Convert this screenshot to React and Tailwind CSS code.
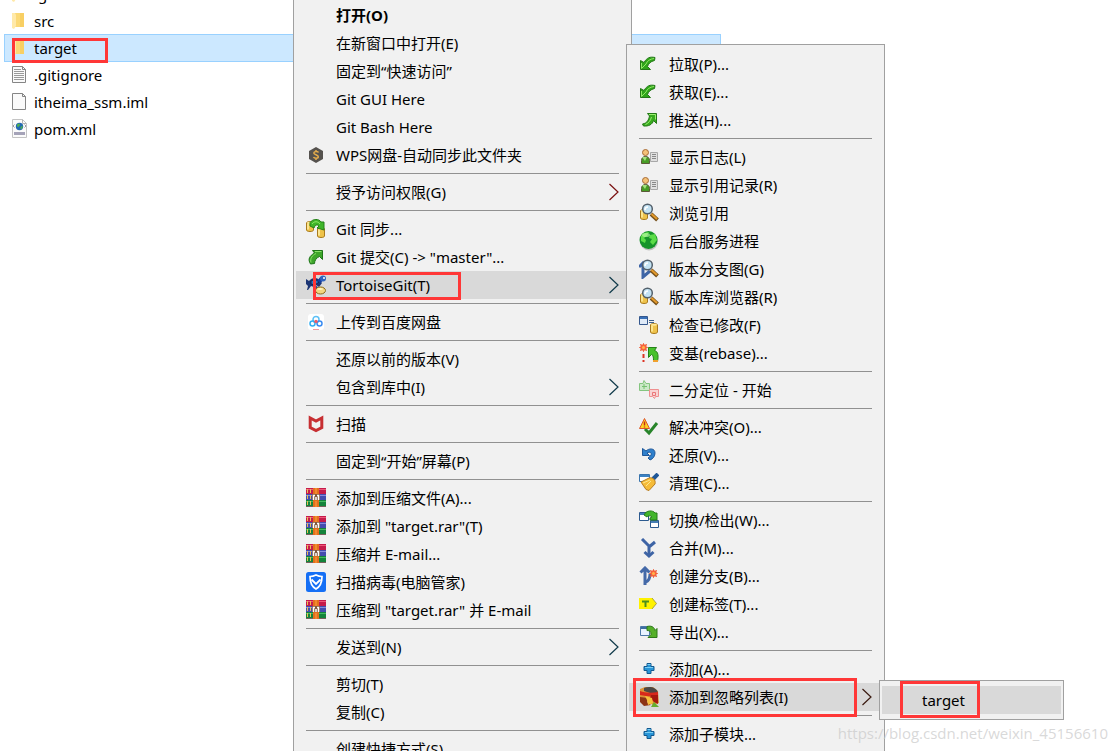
import { useState } from 'react';

const svg = { width: 20, height: 20, viewBox: '0 0 20 20', fill: 'none', 'aria-hidden': true };

function Folder() {
  return (
    <svg {...svg}>
      <path d="M3 2h9v14H3z" fill="#fbd977" />
      <path d="M8 2h4v14H8z" fill="#f8cf63" />
      <path d="M0 2h3l1 2v11l-2 3-2-1z" fill="#ffe9a9" />
    </svg>
  );
}

function Page({ children }) {
  return (
    <svg {...svg}>
      <path d="M.5 1.500h10l3 3v13H.500z" fill="#fafafa" stroke="#858585" />
      <path d="M10.500 1.500v3h3" stroke="#858585" />
      {children}
    </svg>
  );
}

function TextPage() {
  return (
    <Page>
      <path d="M2 4.500h7M2 6.500h10M2 8.500h10M2 10.500h10M2 12.500h10M2 14.500h10" stroke="#9a9a9a" />
    </Page>
  );
}

function XmlPage() {
  return (
    <svg {...svg}>
      <path d="M.500.500h10l4 4v14H.500z" fill="#fbfbfb" stroke="#c4c4c4" />
      <path d="M10.500.500v4h4" stroke="#b5b5b5" />
      <path d="M2.500 5.500 1 7l1.500 1.500M12.500 5.500 14 7l-1.500 1.500" stroke="#9b9ba5" />
      <circle cx="7.500" cy="7.500" r="3.700" fill="#2369b4" />
      <path d="M5 5.500c2-2 3-1 3 .500L6.500 8 5 7.500zM8.500 8l2-1.500c.500 2-.500 3.500-2 4z" fill="#4faf50" />
      <path d="M2 13h11v3H2z" fill="#a5a3b8" />
    </svg>
  );
}

function Wps() {
  return (
    <svg {...svg}>
      <path d="M10 2l7 4v8l-7 4-7-4V6z" fill="#55524e" />
      <path d="M12.500 7.500C12 6 8 6 7.800 8c0 2 4.500 1.500 4.500 3.700 0 2-4 2-4.800.300M10 5v1.500M10 13.500V15" stroke="#e5ad4c" strokeWidth="1.500" />
    </svg>
  );
}

function Jar({ x, y }) {
  return (
    <g transform={`translate(${x} ${y})`}>
      <path d="M.500 2c0-2 7-2 7 0v7c0 2-7 2-7 0z" fill="#eec24a" stroke="#a87a1f" />
      <path d="M2 2.500v6" stroke="#fff0a8" strokeWidth="1.500" />
      <ellipse cx="4" cy="1.800" rx="3" ry="1" fill="#ffe999" />
    </g>
  );
}

function Sync() {
  return (
    <svg {...svg}>
      <Jar x={0} y={2} />
      <Jar x={11} y={8} />
      <path d="M4 7V3.500C7-.500 13-.500 15 3h3v8l-7-2 2-2c-2-2-4-1-5 2z" fill="#3fb529" stroke="#248118" />
      <path d="M6 5c2-3 6-3 8 0" stroke="#8fe968" />
    </svg>
  );
}

function CommitArrow() {
  return (
    <svg {...svg}>
      <path d="M6.500 3.500h10v9l-3-3c-3 1-5 4-5 7l-4 .500c-3-5-1-8 4-11z" fill="#3da52a" stroke="#1d7518" />
      <path d="M9 4.500h6.500M10 6.500c-4 2-6 5-5 9" stroke="#8be168" />
    </svg>
  );
}

function PullArrow() {
  return (
    <svg {...svg}>
      <path d="M1.500 6.500v9h10l-3-3c1-3 3-5 7-6l.500-3c-5-1-8 0-11 5z" fill="#2fa51b" stroke="#247817" />
      <path d="M2.500 9v5.500L7 10c1-3 4-5 8-5.500" stroke="#90e963" />
    </svg>
  );
}

function PushArrow() {
  return (
    <svg {...svg}>
      <path d="M8.500 3.500h9v10l-3-3c-1 4-5 6-10 5.500l-1-2c5-1 6-4 7-8z" fill="#38ab1f" stroke="#247817" />
      <path d="M10 4.500h6.500v5M12.500 7c-1 4-3 6-6 7.500" stroke="#9bef70" />
    </svg>
  );
}

function Tortoise() {
  return (
    <svg {...svg}>
      <path d="M0 4l3 2c3-4 9-4 11 0l2 2-3 4-3-2-2 2-3-1-3 4H1l1-4-2-2z" fill="#1c3574" />
      <path d="M5 6l4-2 4 3-4 3-4-1z" fill="#2b75c4" stroke="#15264e" />
      <path d="M13 7l3-4" stroke="#163c9e" strokeWidth="4" />
      <circle cx="17" cy="3.500" r="3" fill="#3064c0" />
      <circle cx="18" cy="3" r="1" fill="#fff" />
      <path d="M8 11l8 6" stroke="#234b9c" strokeWidth="3" />
      <ellipse cx="14.500" cy="15.500" rx="5" ry="3.500" fill="#f2d681" stroke="#8d6b1b" />
      <ellipse cx="14" cy="14" rx="3" ry="1" fill="#fff4bd" />
    </svg>
  );
}

function Baidu() {
  return (
    <svg {...svg}>
      <rect x="2" y="2" width="16" height="16" rx="3" fill="#fff" />
      <circle cx="10" cy="7.500" r="3" stroke="#5cc0f6" strokeWidth="1.500" />
      <circle cx="6.500" cy="11.500" r="2.500" stroke="#32aef2" strokeWidth="1.500" />
      <circle cx="13.500" cy="11.500" r="2.500" stroke="#3a8cf2" strokeWidth="1.500" />
      <circle cx="10" cy="9.500" r="1.700" fill="#f25c65" />
      <path d="M7 17.500h6" stroke="#ee9da3" />
    </svg>
  );
}

function Mcafee() {
  return (
    <svg {...svg}>
      <path d="M4.200 4v9.500l5.800 3 5.800-3V4L10 7z" stroke="#c72f32" strokeWidth="3" />
    </svg>
  );
}

function Rar() {
  return (
    <svg {...svg}>
      <path d="M0 0h20v6H0z" fill="#c51b4b" />
      <path d="M0 1h20v1H0z" fill="#ed5779" />
      <path d="M0 6h20v6H0z" fill="#444cae" />
      <path d="M0 7h20v1H0z" fill="#858bdc" />
      <path d="M0 12h20v6H0z" fill="#14833b" />
      <path d="M0 13h20v1H0z" fill="#43b95e" />
      <path d="M0 18h20v1H0z" fill="#77605c" />
      <path d="M1.500 1v4M1.500 7v4M1.500 13v4M4.500 1v4M4.500 7v4M4.500 13v4" stroke="#e6bd54" />
      <path d="M7 0h6v19H7z" fill="#e3701c" />
      <path d="M10 0v6M10 13v6" stroke="#ffa143" />
      <path d="M6 6h8v6H6z" fill="#80583e" />
      <path d="M7.500 12V7.500h1.500M12.500 12V7.500H11M10 9v3" stroke="#fff" strokeWidth="1.500" />
    </svg>
  );
}

function Guard() {
  return (
    <svg {...svg}>
      <rect width="20" height="20" rx="2.500" fill="#156ff5" />
      <path d="M10 3c2 1 4 1.500 6 1.500 0 6-1.500 10-6 12.500C5.500 14.500 4 10.500 4 4.500 6 4.500 8 4 10 3z" stroke="#fff" strokeWidth="1.700" />
      <path d="M5.500 7.500 10 12l4.500-4.500" stroke="#fff" strokeWidth="1.800" />
    </svg>
  );
}

function Log() {
  return (
    <svg {...svg}>
      <path d="M11.500 5.500h7v9h-7z" fill="#e0e0e0" stroke="#a8a8a8" />
      <path d="M13 7.500h4M13 9.500h4M13 11.500h4" stroke="#888" />
      <path d="M2.500 16.500v-3c0-3 2-4 4-4s4 1 4 4v3z" fill="#479c25" stroke="#5b5a38" />
      <path d="M3 10l3 4 2-4" fill="#a5e080" />
      <circle cx="6.500" cy="5.500" r="3" fill="#f4c178" stroke="#a86b35" />
    </svg>
  );
}

function Magnifier({ children }) {
  return (
    <svg {...svg}>
      {children}
      <path d="M12 11l6.500 6" stroke="#75501a" strokeWidth="4" />
      <path d="M12.500 11l5.500 5" stroke="#e49a2b" strokeWidth="2" />
      <circle cx="8.500" cy="6" r="4.800" fill="#c4e3f4" stroke="#53606b" strokeWidth="1.500" />
      <path d="M6 7c0-2 1-3 3-3" stroke="#fff" strokeWidth="1.500" />
    </svg>
  );
}

function BrowseRefs() {
  return (
    <Magnifier>
      <Jar x={1} y={6} />
    </Magnifier>
  );
}

function RevGraph() {
  return (
    <Magnifier>
      <path d="M0 8l4-4 4 5M4 5v13l7-6" stroke="#3e65a6" strokeWidth="3" />
    </Magnifier>
  );
}

function Globe() {
  return (
    <svg {...svg}>
      <circle cx="10" cy="10.500" r="9" fill="#777" opacity=".4" />
      <circle cx="9.500" cy="9" r="9" fill="#16942a" />
      <path d="M2 5c2-3 5-4 8-4L8 5 5 7l2 2-1 3-4-2zM11 4l5-1 2 6-4 5-3-3 2-3-3-1z" fill="#5bdc48" />
      <ellipse cx="7" cy="4" rx="4" ry="2" fill="#c4ffb1" opacity=".6" />
    </svg>
  );
}

function CheckMods() {
  return (
    <svg {...svg}>
      <path d="M.500 1.500h8v8h-8z" fill="#dfeaf8" stroke="#35588e" />
      <path d="M1 2h7v2H1z" fill="#3970b8" />
      <path d="M10 5.500h5M10 7.500h5" stroke="#3d608c" />
      <Jar x={11} y={8} />
    </svg>
  );
}

function Burst({ x, y }) {
  return (
    <g transform={`translate(${x} ${y})`}>
      <path d="M0-4l1 2 2-1-1 2 2 1-2 1 1 2-2-1-1 2-1-2-2 1 1-2-2-1 2-1-1-2 2 1z" fill="#ff6238" stroke="#f05a35" />
      <circle r="1.500" fill="#ffb64a" />
    </g>
  );
}

function Rebase() {
  return (
    <svg {...svg}>
      <Burst x={4.5} y={4.5} />
      <path d="M4.500 11v4M4.500 17v2" stroke="#dd3424" strokeWidth="2" />
      <path d="M9.500 4.500h8l-2 3c4 1 4 6 3 11h-4c0-4 0-6-2-7l-3 3z" fill="#48c22c" stroke="#258218" />
      <path d="M14 17h5v2h-5z" fill="#f0a12e" />
    </svg>
  );
}

function Bisect() {
  return (
    <svg {...svg}>
      <path d="M5 .500l2 3h3.500v7H.500v-7H4z" fill="#cbe9c7" stroke="#84c57f" />
      <path d="M5 4v5M3 6.500h5" stroke="#76c070" />
      <path d="M10.500 9.500h9v7h-3l-1 2-2-2h-3z" fill="#f8d3d3" stroke="#ef8f90" />
      <path d="M13.500 12.500h3v3h-3z" stroke="#ea7779" />
    </svg>
  );
}

function Resolve() {
  return (
    <svg {...svg}>
      <path d="M6 12l4 4 8-10" stroke="#28842a" strokeWidth="3" />
      <path d="M5.500 1.500l5 10h-10z" fill="#ffd51f" stroke="#dc552a" />
      <path d="M5.500 4.500v4M5.500 9.500v1" stroke="#c72d14" strokeWidth="1.500" />
    </svg>
  );
}

function Revert() {
  return (
    <svg {...svg}>
      <path d="M3.500 3.500v7h7L8 8c3-2 5 0 4 2-1 1.500-1.500 2-3 3l2 2c3-1 5-4 5-7 0-5-6-5-9-2z" fill="#2f80cc" stroke="#1e579a" />
    </svg>
  );
}

function CleanUp() {
  return (
    <svg {...svg}>
      <path d="M.500 1.500h10v7H.500z" fill="#fff" stroke="#3974ad" />
      <path d="M1 2h9v2H1z" fill="#3c82c3" />
      <path d="M14 6l5-5" stroke="#205797" strokeWidth="4" />
      <path d="M2 9l8-4c4-1 7 2 6 6l-6 6.500-3-1z" fill="#f5bb38" stroke="#b87d21" />
      <path d="M4 10l7-3M7 13l5-5" stroke="#ffe68d" />
    </svg>
  );
}

function Switch() {
  return (
    <svg {...svg}>
      <path d="M.500 2.500h9v8h-9zM11.500 10.500h8v7h-8z" fill="#fff" stroke="#2c5a8f" />
      <path d="M1 3h8v2H1zM12 11h7v2h-7z" fill="#477db4" />
      <path d="M5 5c2-5 9-5 11-2h2v7h-7V8l2-1c-2-2-4-1-5 0z" fill="#42b52b" stroke="#257c18" />
    </svg>
  );
}

function Merge() {
  return (
    <svg {...svg}>
      <path d="M3 1l7 7v10M16 4l-6 5" stroke="#3e64a5" strokeWidth="3" />
      <path d="M5.500 14 10 18l4.500-4" stroke="#3e64a5" strokeWidth="3" />
    </svg>
  );
}

function Branch() {
  return (
    <svg {...svg}>
      <path d="M6 19V2M1.500 6.500 6 2l4.500 4.500M7 16c4-2 4-5 4-8" stroke="#4469a8" strokeWidth="3" />
      <Burst x={14.5} y={7.5} />
    </svg>
  );
}

function Tag() {
  return (
    <svg {...svg}>
      <path d="M0 4h13l4.500 5.500L13 15H0z" fill="#fff200" />
      <path d="M13 4l4.500 5.500L13 15" stroke="#aaa13d" />
      <path d="M3 7.500h7M6.500 7.500V13" stroke="#4d8f1d" strokeWidth="2" />
    </svg>
  );
}

function Export() {
  return (
    <svg {...svg}>
      <path d="M1.500 4.500h9v9h-9z" fill="#e9f3ff" stroke="#4c78a9" />
      <path d="M2 5h8v2H2z" fill="#3e6da1" />
      <path d="M8 4.500c4-1 7 0 8 4l2-2v9H9l3-3c0-3-1-4-4-4z" fill="#55af28" stroke="#2d7819" />
    </svg>
  );
}

function Plus() {
  return (
    <svg {...svg}>
      <path d="M8 4.500h4v3h3v4h-3v3H8v-3H5v-4h3z" fill="#2995d7" stroke="#12588e" />
      <path d="M8.500 5.500h3M6 8.500h8" stroke="#79cef4" />
    </svg>
  );
}

function Ignore() {
  return (
    <svg {...svg}>
      <path d="M1 2l5-2h8l5 4 1 12-6 2-8-5-5 1z" fill="#dc9238" />
      <path d="M5 1c5-2 13-1 14 5l-5 1-9-3z" fill="#4c4745" />
      <path d="M1 4c5 2 11 2 18 1v5L7 9 1 8z" fill="#d8281b" />
      <path d="M12 8h7v9l-4-2-4-4z" fill="#a6180f" />
      <path d="M1 10l8 1-1 4 4 3-7 1-4-4z" fill="#8d3416" />
      <path d="M6 9l7 2 1 5-5 2-1-5z" fill="#f8bf3d" />
      <path d="M12 20l3-5 5 5z" fill="#65ae2e" />
    </svg>
  );
}

const SEP = null;

const explorerItems = [
  { label: '打开(O)', bold: true },
  { label: '在新窗口中打开(E)' },
  { label: '固定到“快速访问”' },
  { label: 'Git GUI Here' },
  { label: 'Git Bash Here' },
  { label: 'WPS网盘-自动同步此文件夹', icon: Wps },
  SEP,
  { label: '授予访问权限(G)', arrow: 'text-[#7a1010]' },
  SEP,
  { label: 'Git 同步...', icon: Sync },
  { label: 'Git 提交(C) -> "master"...', icon: CommitArrow },
  { label: 'TortoiseGit(T)', icon: Tortoise, arrow: 'text-[#103a4a]', active: true, mark: 'left-[17px] top-px w-[148px] h-7' },
  SEP,
  { label: '上传到百度网盘', icon: Baidu },
  SEP,
  { label: '还原以前的版本(V)' },
  { label: '包含到库中(I)', arrow: 'text-[#103a4a]' },
  SEP,
  { label: '扫描', icon: Mcafee },
  SEP,
  { label: '固定到“开始”屏幕(P)' },
  SEP,
  { label: '添加到压缩文件(A)...', icon: Rar },
  { label: '添加到 "target.rar"(T)', icon: Rar },
  { label: '压缩并 E-mail...', icon: Rar },
  { label: '扫描病毒(电脑管家)', icon: Guard },
  { label: '压缩到 "target.rar" 并 E-mail', icon: Rar },
  SEP,
  { label: '发送到(N)', arrow: 'text-[#103a4a]' },
  SEP,
  { label: '剪切(T)' },
  { label: '复制(C)' },
  SEP,
  { label: '创建快捷方式(S)' },
];

const gitItems = [
  { label: '拉取(P)...', icon: PullArrow },
  { label: '获取(E)...', icon: PullArrow },
  { label: '推送(H)...', icon: PushArrow },
  SEP,
  { label: '显示日志(L)', icon: Log },
  { label: '显示引用记录(R)', icon: Log },
  { label: '浏览引用', icon: BrowseRefs },
  { label: '后台服务进程', icon: Globe },
  { label: '版本分支图(G)', icon: RevGraph },
  { label: '版本库浏览器(R)', icon: BrowseRefs },
  { label: '检查已修改(F)', icon: CheckMods },
  { label: '变基(rebase)...', icon: Rebase },
  SEP,
  { label: '二分定位 - 开始', icon: Bisect },
  SEP,
  { label: '解决冲突(O)...', icon: Resolve },
  { label: '还原(V)...', icon: Revert },
  { label: '清理(C)...', icon: CleanUp },
  SEP,
  { label: '切换/检出(W)...', icon: Switch },
  { label: '合并(M)...', icon: Merge },
  { label: '创建分支(B)...', icon: Branch },
  { label: '创建标签(T)...', icon: Tag },
  { label: '导出(X)...', icon: Export },
  SEP,
  { label: '添加(A)...', icon: Plus },
  { label: '添加到忽略列表(I)', icon: Ignore, arrow: 'text-[#3a1a10]', active: true, mark: 'left-1 -top-[5px] w-56 h-[39px]' },
  SEP,
  { label: '添加子模块...', icon: Plus },
];

const ignoreItems = [
  { label: 'target', active: true, mark: 'left-[18px] -top-[5px] w-20 h-[37px]' },
];

const files = [
  { name: '.git', icon: Folder },
  { name: 'src', icon: Folder },
  { name: 'target', icon: Folder },
  { name: '.gitignore', icon: TextPage },
  { name: 'itheima_ssm.iml', icon: Page },
  { name: 'pom.xml', icon: XmlPage },
];

function Mark({ className }) {
  return <span className={`absolute z-10 border-3 border-[#ff3737] pointer-events-none ${className}`} />;
}

function Chevron({ className }) {
  return (
    <svg width="10" height="18" viewBox="0 0 10 18" fill="none" className={`ml-auto ${className}`} aria-hidden="true">
      <path d="M.500 1 9 9l-8.500 8" stroke="currentColor" strokeWidth="1.200" />
    </svg>
  );
}

function Menu({ items, label, className }) {
  return (
    <ul role="menu" aria-label={label} className={`absolute bg-[#f1f1f1] border border-[#a0a0a0] px-0.5 ${className}`}>
      {items.map((item, i) => {
        if (!item) {
          return <li key={i} role="separator" className="mx-2.5 my-1 h-px bg-[#919191]" />;
        }
        const Icon = item.icon;
        return (
          <li key={i} role="none" className="relative">
            <button
              type="button"
              role="menuitem"
              className={`flex items-center w-full h-7 px-2.5 text-left whitespace-nowrap ${
                item.active ? 'bg-[#d9d9d9]' : 'hover:bg-[#d9d9d9]'
              } ${item.bold ? 'font-bold' : ''}`}
            >
              <span className="w-5 mr-2.5 shrink-0">{Icon && <Icon />}</span>
              {item.label}
              {item.arrow && <Chevron className={item.arrow} />}
            </button>
            {item.mark && <Mark className={item.mark} />}
          </li>
        );
      })}
    </ul>
  );
}

export default function App() {
  const [selected, setSelected] = useState('target');

  return (
    <main className="relative h-screen overflow-hidden bg-white text-black text-[15px] leading-5 font-['Noto_Sans','Noto_Sans_CJK_SC',sans-serif]">
      <ul className="-mt-5 ml-1 max-w-[717px]">
        {files.map(({ name, icon: Icon }) => (
          <li key={name} className="relative -mb-px">
            <button
              type="button"
              onClick={() => setSelected(name)}
              className={`flex items-center gap-0.5 w-full h-7 pl-[7px] border text-left ${
                selected === name ? 'bg-[#cce8ff] border-[#99d1ff]' : 'border-transparent'
              }`}
            >
              <Icon />
              {name}
            </button>
            {name === 'target' && <Mark className="left-2 top-1 w-24 h-[25px]" />}
          </li>
        ))}
      </ul>

      <Menu items={explorerItems} label="target" className="left-[293px] top-0 w-[339px] border-t-0 pt-px" />
      <Menu items={gitItems} label="TortoiseGit" className="left-[626px] top-11 w-[259px] py-[5px] pb-20" />
      <Menu items={ignoreItems} label="添加到忽略列表" className="left-[879px] top-[680px] w-[185px] py-[5px]" />

      <p className="absolute right-2 bottom-2 z-20 text-[#c8c8c8]/70 font-['Open_Sans',sans-serif] pointer-events-none">
        https://blog.csdn.net/weixin_45156610
      </p>
    </main>
  );
}
